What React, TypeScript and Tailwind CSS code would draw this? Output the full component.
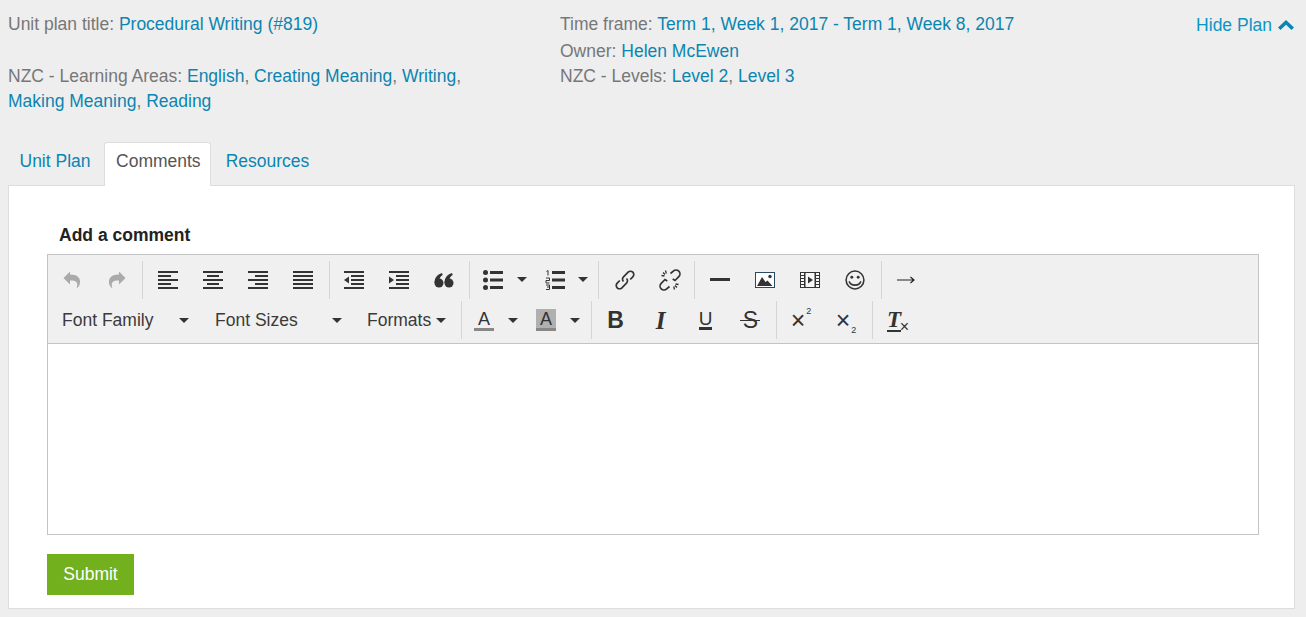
import type { ReactNode } from "react";

function Caret() {
  return <span className="inline-block h-0 w-0 shrink-0 border-x-[5px] border-t-[5px] border-x-transparent border-t-[#333]" />;
}

function Sep() {
  return <span className="mx-[1px] h-[38px] w-px shrink-0 bg-[#d4d4d4]" />;
}

function Gap({ w }: { w: number }) {
  return <span style={{ width: w }} className="shrink-0" />;
}

function Btn({ w = 45, children }: { w?: number; children: ReactNode }) {
  return (
    <button type="button" style={{ width: w }} className="flex h-[38px] shrink-0 items-center justify-center text-[#333]">
      {children}
    </button>
  );
}

function Icon({ children }: { children: ReactNode }) {
  return (
    <svg width="20" height="20" viewBox="0 0 20 20" fill="none">
      {children}
    </svg>
  );
}

function Lines({ rows }: { rows: [number, number][] }) {
  return (
    <Icon>
      {rows.map(([x, w], i) => (
        <rect key={i} x={x} y={1 + i * 4} width={w} height="2" fill="#333" />
      ))}
    </Icon>
  );
}

function Indent({ flip }: { flip?: boolean }) {
  return (
    <Icon>
      <rect x="0" y="1" width="20" height="2" fill="#333" />
      <rect x="7" y="5" width="13" height="2" fill="#333" />
      <rect x="7" y="9" width="13" height="2" fill="#333" />
      <rect x="7" y="13" width="13" height="2" fill="#333" />
      <rect x="0" y="17" width="20" height="2" fill="#333" />
      <path d={flip ? "M0 6.500v7l5-3.500z" : "M5 6.500v7L0 10z"} fill="#333" />
    </Icon>
  );
}

function ChainLink({ broken }: { broken?: boolean }) {
  return (
    <svg width="22" height="22" viewBox="0 0 22 22" fill="none" stroke="#333" strokeWidth="1.700">
      {broken ? (
        <>
          <path d="M11.500 4.500l2.800-2.300a3.300 3.300 0 0 1 5.500 5.500l-3.800 3.800-2.300-1.500" />
          <path d="M10.500 17.500l-2.800 2.300a3.300 3.300 0 0 1-5.500-5.500l3.800-3.800 2.300 1.500" />
          <path d="M2.500 6.500l3 .5M6.500 1.500l.8 3M4 3.500l2 2M19.500 15.500l-3-.5M15.500 20.500l-.8-3M18 18.500l-2-2" strokeWidth="1.300" />
        </>
      ) : (
        <>
          <path d="M9.500 12.500a3.300 3.300 0 0 1 0-4.700l4.600-4.600a3.300 3.300 0 0 1 4.700 4.700l-2.600 2.600" />
          <path d="M12.500 9.500a3.300 3.300 0 0 1 0 4.700l-4.600 4.600a3.300 3.300 0 0 1-4.700-4.700l2.600-2.600" />
        </>
      )}
    </svg>
  );
}

function Toolbar() {
  return (
    <div className="border-b border-[#c4c4c4] bg-[#f0f0f0] pl-px">
      <div className="flex h-[44px] items-center pt-[5px]">
        <Btn>
          <Icon>
            <path d="M8 1.500 1.500 8 8 14.500v-4c4 0 6 .5 7 2.500.5 1.500.3 3.500-.5 5.500 3.500-2 4.500-7 2.500-10.500-1.500-2.500-4.500-3.500-9-3.500z" fill="#aaa" />
          </Icon>
        </Btn>
        <Btn>
          <Icon>
            <path d="M12 1.500 18.500 8 12 14.500v-4c-4 0-6 .5-7 2.500-.5 1.500-.3 3.500.5 5.500-3.500-2-4.500-7-2.500-10.500 1.500-2.500 4.500-3.500 9-3.500z" fill="#aaa" />
          </Icon>
        </Btn>
        <Gap w={2} />
        <Sep />
        <Gap w={1} />
        <Btn>
          <Lines rows={[[0, 20], [0, 13], [0, 20], [0, 13], [0, 20]]} />
        </Btn>
        <Btn>
          <Lines rows={[[0, 20], [4, 12], [0, 20], [4, 12], [0, 20]]} />
        </Btn>
        <Btn>
          <Lines rows={[[0, 20], [7, 13], [0, 20], [7, 13], [0, 20]]} />
        </Btn>
        <Btn>
          <Lines rows={[[0, 20], [0, 20], [0, 20], [0, 20], [0, 20]]} />
        </Btn>
        <Gap w={3} />
        <Sep />
        <Btn>
          <Indent />
        </Btn>
        <Btn>
          <Indent flip />
        </Btn>
        <Btn>
          <Icon>
            <circle cx="5" cy="13" r="4.500" fill="#333" />
            <path d="M.5 13C.5 8 3 4.500 8 3l.7 2C6.500 6.200 5.500 8 5.500 10z" fill="#333" />
            <circle cx="15" cy="13" r="4.500" fill="#333" />
            <path d="M10.500 13c0-5 2.500-8.500 7.500-10l.7 2c-2.200 1.200-3.200 3-3.200 5z" fill="#333" />
          </Icon>
        </Btn>
        <Gap w={2} />
        <Sep />
        <Gap w={12} />
        <Icon>
          <circle cx="2.500" cy="2.500" r="2.500" fill="#333" />
          <circle cx="2.500" cy="10" r="2.500" fill="#333" />
          <circle cx="2.500" cy="17.500" r="2.500" fill="#333" />
          <rect x="7" y="1" width="13" height="3" fill="#333" />
          <rect x="7" y="8.500" width="13" height="3" fill="#333" />
          <rect x="7" y="16" width="13" height="3" fill="#333" />
        </Icon>
        <Gap w={14} />
        <Caret />
        <Gap w={18} />
        <Icon>
          <rect x="7" y="1" width="13" height="3" fill="#333" />
          <rect x="7" y="8.500" width="13" height="3" fill="#333" />
          <rect x="7" y="16" width="13" height="3" fill="#333" />
          <path d="M1.500 1.500 3 .5V5.500M1 8h3.500v2.500H1V13h3.500M1 15h3.500v2H2m2.500 0v2.500H1" stroke="#333" strokeWidth="1" />
        </Icon>
        <Gap w={13} />
        <Caret />
        <Gap w={9} />
        <Sep />
        <Gap w={2} />
        <Btn>
          <ChainLink />
        </Btn>
        <Btn>
          <ChainLink broken />
        </Btn>
        <Gap w={1} />
        <Sep />
        <Gap w={1} />
        <Btn>
          <span className="h-[3px] w-[20px] bg-[#333]" />
        </Btn>
        <Btn>
          <svg width="20" height="16" viewBox="0 0 20 16">
            <rect x=".5" y=".5" width="19" height="15" fill="#fff" stroke="#2b4a60" />
            <path d="M2 14 7 5l3.500 5 2-1.500 5 5.500z" fill="#333" />
            <circle cx="15" cy="4.500" r="1.700" fill="#333" />
          </svg>
        </Btn>
        <Btn>
          <svg width="20" height="16" viewBox="0 0 20 16">
            <rect x=".5" y=".5" width="19" height="15" fill="#f8f8f8" stroke="#333" />
            <rect x="4" y="0" width="1.500" height="16" fill="#333" />
            <rect x="14.500" y="0" width="1.500" height="16" fill="#333" />
            <path d="M1 3.500h3M1 6.500h3M1 9.500h3M1 12.500h3M16 3.500h3M16 6.500h3M16 9.500h3M16 12.500h3" stroke="#333" />
            <path d="M8 4.500v7l5-3.500z" fill="#333" />
          </svg>
        </Btn>
        <Btn>
          <svg width="20" height="20" viewBox="0 0 22 22" fill="none" stroke="#333" strokeWidth="1.700">
            <circle cx="11" cy="11" r="9.800" />
            <circle cx="7.500" cy="8" r="1.600" fill="#333" stroke="none" />
            <circle cx="14.500" cy="8" r="1.600" fill="#333" stroke="none" />
            <path d="M4.500 12.500c2 5.500 11 5.500 13 0" />
          </svg>
        </Btn>
        <Gap w={3} />
        <Sep />
        <Btn w={46}>
          <svg width="18" height="10" viewBox="0 0 18 10" fill="none" stroke="#222" strokeWidth="1.200">
            <path d="M0 5h17M13.500 2 17 5l-3.500 3" />
          </svg>
        </Btn>
      </div>
      <div className="flex h-[44px] items-center pb-[2px] text-[17.5px] text-[#3a3a3a]">
        <Gap w={13} />
        <span className="w-[117px]">Font Family</span>
        <Caret />
        <Gap w={26} />
        <span className="w-[117px]">Font Sizes</span>
        <Caret />
        <Gap w={25} />
        <span className="w-[69px]">Formats</span>
        <Caret />
        <Gap w={14} />
        <Sep />
        <Gap w={11} />
        <span className="flex h-[22px] w-[20px] items-end justify-center border-b-[3px] border-[#888] text-[18px] leading-[18px] font-medium text-[#333]">A</span>
        <Gap w={14} />
        <Caret />
        <Gap w={18} />
        <span className="flex h-[22px] w-[20px] items-end justify-center border-b-[3px] border-[#888] bg-[#b0b0b0] text-[18px] leading-[18px] font-medium text-[#333]">A</span>
        <Gap w={14} />
        <Caret />
        <Gap w={10} />
        <Sep />
        <Btn>
          <span className="text-[23px] leading-none font-bold">B</span>
        </Btn>
        <Btn>
          <span className="font-['Liberation_Serif',serif] text-[25px] leading-none font-bold italic">I</span>
        </Btn>
        <Btn>
          <span className="border-b-[3px] border-[#333] text-[19px] leading-[17px]">U</span>
        </Btn>
        <Btn>
          <span className="relative text-[23px] leading-none">
            S<span className="absolute top-[11px] -left-[3px] h-px w-[20px] bg-[#333]" />
          </span>
        </Btn>
        <Gap w={2} />
        <Sep />
        <Btn>
          <span className="relative pr-[5px] text-[25px] leading-none">
            ×<span className="absolute top-[-1px] right-[-1px] text-[9px] leading-none">2</span>
          </span>
        </Btn>
        <Btn>
          <span className="relative pr-[5px] text-[25px] leading-none">
            ×<span className="absolute right-[-1px] bottom-[-2px] text-[9px] leading-none">2</span>
          </span>
        </Btn>
        <Gap w={3} />
        <Sep />
        <Btn w={47}>
          <span className="relative pr-[7px]">
            <span className="block border-b-[2px] border-[#333] font-['Liberation_Serif',serif] text-[23px] leading-[21px] font-bold italic">T</span>
            <span className="absolute right-[-1px] bottom-[-3px] text-[16px] leading-none">×</span>
          </span>
        </Btn>
      </div>
    </div>
  );
}

export default function App() {
  return (
    <div className="h-[617px] bg-[#eeeeee] pr-[11px] pl-2 font-['Liberation_Sans',Arial,sans-serif] text-[17.5px] leading-[25.6px] text-[#777]">
      <div className="grid grid-cols-[552px_1fr_auto] pt-3">
        <div>
          <div>
            Unit plan title: <a className="text-[#0b85b1]">Procedural Writing (#819)</a>
          </div>
          <div className="mt-[26px] w-[470px]">
            NZC - Learning Areas: <a className="text-[#0b85b1]">English</a>, <a className="text-[#0b85b1]">Creating Meaning</a>,{" "}
            <a className="text-[#0b85b1]">Writing</a>, <a className="text-[#0b85b1]">Making Meaning</a>,{" "}
            <a className="text-[#0b85b1]">Reading</a>
          </div>
        </div>
        <div>
          <div>
            Time frame: <a className="text-[#0b85b1]">Term 1, Week 1, 2017 - Term 1, Week 8, 2017</a>
          </div>
          <div className="mt-px">
            Owner: <a className="text-[#0b85b1]">Helen McEwen</a>
          </div>
          <div>
            NZC - Levels: <a className="text-[#0b85b1]">Level 2</a>, <a className="text-[#0b85b1]">Level 3</a>
          </div>
        </div>
        <a className="flex items-start gap-[6px] pt-px pr-[1px] text-[#0b95c4]">
          Hide Plan
          <svg width="16" height="10" viewBox="0 0 16 10" className="mt-[7px]">
            <path d="M8 0 16 7.500 13.500 10 8 4.800 2.500 10 0 7.500z" fill="#0b85b1" />
          </svg>
        </a>
      </div>

      <div className="mt-[27px] flex h-[43px] gap-[2px]">
        <a className="border border-transparent px-[10.500px] py-[6px] text-[#0b85b1]">Unit Plan</a>
        <a className="relative z-10 h-[44px] rounded-t-[3px] border border-b-0 border-[#dddddd] bg-white pt-[6px] pr-[9px] pl-[11px] text-[#555]">
          Comments
        </a>
        <a className="border border-transparent px-[12px] py-[6px] text-[#0b85b1]">Resources</a>
      </div>

      <div className="h-[424px] border border-[#dddddd] bg-white pr-[35px] pl-[38px]">
        <h3 className="mt-[37px] ml-[12px] font-bold text-[#222]">Add a comment</h3>
        <div className="mt-[6px] border border-[#c4c4c4]">
          <Toolbar />
          <div className="h-[190px] bg-white" />
        </div>
        <button type="button" className="mt-[19px] h-[41px] w-[87px] bg-[#72b01d] text-white">
          Submit
        </button>
      </div>
    </div>
  );
}
